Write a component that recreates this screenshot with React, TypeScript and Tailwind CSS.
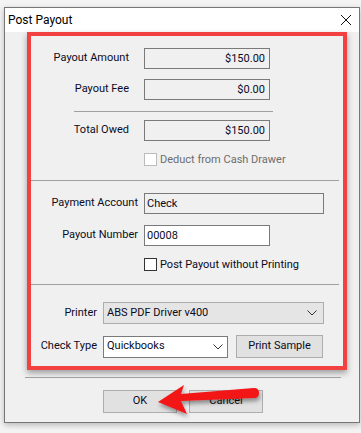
import React from 'react';

const FONT = { fontFamily: 'Roboto, "Liberation Sans", Arial, sans-serif' };

function Field({ value, width, align = 'left', disabled = false }: { value: string; width: string; align?: 'left' | 'right'; disabled?: boolean }) {
	return (
		<div
			className={`h-[21px] ${width} border flex items-center text-[11px] leading-none ${
				disabled ? 'bg-[#f0f0f0] border-[#7a7a7a]' : 'bg-white border-[#7a7a7a]'
			} ${align === 'right' ? 'justify-end pr-[4px]' : 'pl-[2px]'}`}
		>
			{value}
		</div>
	);
}

function Check({ label, disabled = false }: { label: string; disabled?: boolean }) {
	return (
		<div className="flex items-center">
			<div className={`w-[13px] h-[13px] border bg-white ${disabled ? 'border-[#bcbcbc]' : 'border-[#333333]'}`} />
			<span className={`ml-[3px] text-[11px] leading-none ${disabled ? 'text-[#6d6d6d]' : 'text-[#0b0b1e]'}`}>{label}</span>
		</div>
	);
}

function Chevron() {
	return (
		<svg width="10" height="6" viewBox="0 0 10 6" className="shrink-0">
			<path d="M0.5 0.5 L5 5 L9.5 0.5" fill="none" stroke="#333" strokeWidth="1" />
		</svg>
	);
}

export default function App() {
	return (
		<div className="w-[361px] h-[433px] bg-[#f4f4f4] relative overflow-hidden text-[#0b0b1e]" style={FONT}>
			<div className="ml-[4px] mt-[7px] w-[356px] h-[416px] border border-[#767676] bg-[#f0f0f0] flex flex-col shadow-[0_2px_6px_rgba(0,0,0,0.25)]">
				{/* Title bar */}
				<div className="h-[24px] bg-white flex items-center justify-between pl-[3px] pr-[8px]">
					<span className="text-[12px] leading-none text-black">Post Payout</span>
					<svg width="10" height="10" viewBox="0 0 10 10">
						<path d="M0 0 L10 10 M10 0 L0 10" stroke="#111" strokeWidth="1" />
					</svg>
				</div>

				{/* Highlighted group */}
				<div className="ml-[22px] w-[320px] h-[338px] border-4 border-[#f24141] shadow-[0_3px_6px_rgba(0,0,0,0.35)] flex flex-col text-[11px]">
					{/* Amounts */}
					<div className="flex flex-col pt-[12px]">
						<div className="flex items-center">
							<span className="w-[98px] text-right">Payout Amount</span>
							<div className="ml-[15px]"><Field value="$150.00" width="w-[126px]" align="right" disabled /></div>
						</div>
						<div className="flex items-center mt-[10px]">
							<span className="w-[98px] text-right">Payout Fee</span>
							<div className="ml-[15px]"><Field value="$0.00" width="w-[126px]" align="right" disabled /></div>
						</div>
						<div className="ml-[43px] w-[199px] h-px bg-[#a0a0a0] mt-[11px]" />
						<div className="flex items-center mt-[8px]">
							<span className="w-[98px] text-right">Total Owed</span>
							<div className="ml-[15px]"><Field value="$150.00" width="w-[126px]" align="right" disabled /></div>
						</div>
						<div className="ml-[113px] mt-[12px]"><Check label="Deduct from Cash Drawer" disabled /></div>
					</div>

					<div className="w-[308px] h-px bg-[#a0a0a0] mt-[14px]" />

					{/* Account */}
					<div className="flex flex-col pt-[12px]">
						<div className="flex items-center">
							<span className="w-[107px] text-right">Payment Account</span>
							<div className="ml-[6px]"><Field value="Check" width="w-[180px]" disabled /></div>
						</div>
						<div className="flex items-center mt-[11px]">
							<span className="w-[107px] text-right">Payout Number</span>
							<div className="ml-[6px]"><Field value="00008" width="w-[126px]" /></div>
						</div>
						<div className="ml-[113px] mt-[12px]"><Check label="Post Payout without Printing" /></div>
					</div>

					<div className="w-[308px] h-px bg-[#a0a0a0] mt-[13px]" />

					{/* Printing */}
					<div className="flex flex-col pt-[17px]">
						<div className="flex items-center">
							<span className="w-[66px] text-right">Printer</span>
							<div className="ml-[6px] w-[221px] h-[22px] bg-[#e5e5e5] border border-[#adadad] flex items-center justify-between pl-[3px] pr-[6px]">
								<span>ABS PDF Driver v400</span>
								<Chevron />
							</div>
						</div>
						<div className="flex items-center mt-[11px]">
							<span className="w-[66px] text-right">Check Type</span>
							<div className="ml-[6px] w-[125px] h-[22px] bg-white border border-[#7a7a7a] flex items-center justify-between pl-[3px] pr-[4px]">
								<span>Quickbooks</span>
								<Chevron />
							</div>
							<button className="ml-[8px] w-[87px] h-[23px] bg-[#e1e1e1] border border-[#adadad] text-[11px]">Print Sample</button>
						</div>
					</div>
				</div>

				<div className="ml-[20px] w-[316px] h-px bg-[#a0a0a0] mt-[7px]" />

				<div className="flex mt-[12px] ml-[98px] gap-[12px]">
					<button className="w-[74px] h-[23px] bg-[#e1e1e1] border border-[#adadad] text-[11px]">OK</button>
					<button className="w-[74px] h-[23px] bg-[#e1e1e1] border border-[#adadad] text-[11px]">Cancel</button>
				</div>
			</div>

			{/* Annotation arrow */}
			<svg className="absolute left-0 top-0 pointer-events-none" width="361" height="433" viewBox="0 0 361 433">
				<defs>
					<filter id="sh" x="-20%" y="-50%" width="140%" height="200%">
						<feDropShadow dx="1" dy="3" stdDeviation="2" floodColor="#000" floodOpacity="0.4" />
					</filter>
				</defs>
				<g filter="url(#sh)" fill="#f21414">
					<path d="M158 402 L184 385 L181 394 L254 388 Q259 388 259 393 Q259 398 254 398 L181 401 L187 414 Z" />
				</g>
			</svg>
		</div>
	);
}
